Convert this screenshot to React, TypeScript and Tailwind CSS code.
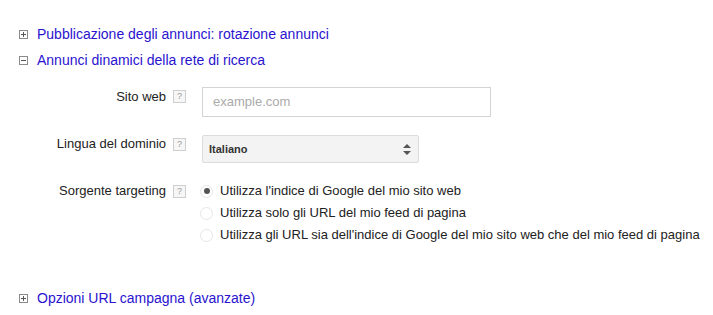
const font = { fontFamily: '"Liberation Sans", Arial, sans-serif' };

function ToggleBox({ open }: { open: boolean }) {
  return (
    <span className="relative flex h-[9px] w-[9px] items-center justify-center border border-[#8a8a8a] bg-white">
      <span className="absolute h-px w-[5px] bg-[#555]" />
      {!open && <span className="absolute h-[5px] w-px bg-[#555]" />}
    </span>
  );
}

function SectionLink({ open, children }: { open: boolean; children: string }) {
  return (
    <div className="flex h-5 items-center pl-[19px]">
      <ToggleBox open={open} />
      <a href="#" className="ml-[9px] text-[14px] text-[#2a13cf]">
        {children}
      </a>
    </div>
  );
}

function Help() {
  return (
    <span className="flex h-[13px] w-[13px] items-center justify-center border border-[#cfcfcf] bg-[#f6f6f6] text-[9px] leading-none text-[#999]">
      ?
    </span>
  );
}

function Radio({ checked, label }: { checked?: boolean; label: string }) {
  return (
    <label className="flex h-[22px] items-center">
      <span className="flex h-[13px] w-[13px] items-center justify-center rounded-full border border-[#e6e6e6] bg-white">
        {checked && <span className="h-[6px] w-[6px] rounded-full bg-[#555]" />}
      </span>
      <span className="ml-[7px] text-[13px] leading-4 text-[#222]">{label}</span>
    </label>
  );
}

export default function App() {
  return (
    <div className="h-[315px] w-[713px] bg-white pt-[24px]" style={font}>
      <SectionLink open={false}>Pubblicazione degli annunci: rotazione annunci</SectionLink>
      <div className="mt-[6px]">
        <SectionLink open>Annunci dinamici della rete di ricerca</SectionLink>
      </div>

      <div className="mt-[17px] flex">
        <div className="flex w-[186px] items-start pt-[2px]">
          <span className="w-[166px] text-right text-[13px] leading-4 text-[#222]">Sito web</span>
          <span className="ml-[7px] mt-[1px]">
            <Help />
          </span>
        </div>
        <div className="ml-[16px] flex h-[30px] w-[289px] items-center border border-[#d4d4d4] bg-white px-[10px] text-[13px] text-[#aaa]">
          example.com
        </div>
      </div>

      <div className="mt-[18px] flex">
        <div className="flex w-[186px] items-start pt-[1px]">
          <span className="w-[166px] text-right text-[13px] leading-4 text-[#222]">Lingua del dominio</span>
          <span className="ml-[7px] mt-[2px]">
            <Help />
          </span>
        </div>
        <div className="ml-[16px] flex h-[28px] w-[217px] items-center justify-between rounded-[2px] border border-[#dcdcdc] bg-[#f3f3f3] pl-[6px] pr-[7px]">
          <span className="text-[11px] font-bold text-[#333]">Italiano</span>
          <svg width="8" height="11" viewBox="0 0 8 11">
            <path d="M4 0L8 4H0Z" fill="#555" />
            <path d="M4 11L8 7H0Z" fill="#555" />
          </svg>
        </div>
      </div>

      <div className="mt-[17px] flex">
        <div className="flex h-[22px] w-[186px] items-center self-start">
          <span className="w-[166px] text-right text-[13px] leading-4 text-[#222]">Sorgente targeting</span>
          <span className="ml-[7px]">
            <Help />
          </span>
        </div>
        <div className="ml-[14px] flex flex-col">
          <Radio checked label="Utilizza l'indice di Google del mio sito web" />
          <Radio label="Utilizza solo gli URL del mio feed di pagina" />
          <Radio label="Utilizza gli URL sia dell'indice di Google del mio sito web che del mio feed di pagina" />
        </div>
      </div>

      <div className="mt-[42px]">
        <SectionLink open={false}>Opzioni URL campagna (avanzate)</SectionLink>
      </div>
    </div>
  );
}
